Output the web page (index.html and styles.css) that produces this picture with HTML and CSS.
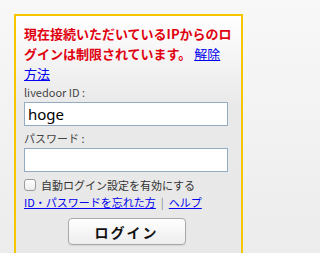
FILE: index.html
```html
<!DOCTYPE html>
<html lang="ja">
<head>
<meta charset="utf-8">
<title>ログイン</title>
<link rel="stylesheet" href="styles.css">
</head>
<body>
<div class="login-box">
  <p class="notice">現在接続いただいているIPからのログインは制限されています。 <a href="#" class="notice-link">解除方法</a></p>
  <label class="field-label" for="uid">livedoor ID :</label>
  <input class="text-input" id="uid" type="text" value="hoge">
  <label class="field-label field-label-spaced" for="pw">パスワード :</label>
  <input class="text-input" id="pw" type="password">
  <div class="auto-row">
    <input type="checkbox" class="check" id="auto">
    <label for="auto" class="auto-label">自動ログイン設定を有効にする</label>
  </div>
  <div class="help-row">
    <a href="#">ID・パスワードを忘れた方</a><span class="sep">|</span><a href="#">ヘルプ</a>
  </div>
  <div class="btn-row">
    <button class="login-btn" type="button">ログイン</button>
  </div>
</div>
</body>
</html>
```

FILE: styles.css
```css
html {
  margin: 0;
  width: 260px;
  height: 253px;
  overflow: hidden;
}
body {
  margin: 0;
  width: 260px;
  height: 253px;
  padding: 14px 17px 0 14px;
  box-sizing: border-box;
  background: linear-gradient(#f8f8f8, #ececec);
  font-family: "Noto Sans CJK JP", "Noto Sans", sans-serif;
  overflow: hidden;
}
.login-box {
  border: 2px solid #f7c600;
  border-bottom: none;
  background: linear-gradient(#ffffff 0px, #e9e9e9 90px, #e8e8e8 100%);
  padding: 8px 8px 0 8px;
  height: 239px;
  box-sizing: border-box;
  overflow: hidden;
}
.notice {
  margin: 0;
  font-size: 13px;
  line-height: 20px;
  font-weight: bold;
  color: #e0000f;
}
.notice-link {
  font-weight: normal;
  color: #0000ee;
}
.field-label {
  display: block;
  font-size: 11px;
  line-height: 16px;
  color: #444;
  margin-bottom: 2px;
}
.field-label-spaced {
  margin-top: 4px;
}
.text-input {
  display: block;
  box-sizing: border-box;
  width: 204px;
  height: 24px;
  margin: 0;
  border: 1px solid #93abc3;
  border-radius: 0;
  background: #fff;
  padding: 0 3px;
  font-family: "Noto Sans", "Noto Sans CJK JP", sans-serif;
  font-size: 15px;
  color: #000;
  outline: none;
}
.auto-row {
  display: flex;
  align-items: center;
  margin-top: 4px;
  height: 18px;
}
.check {
  appearance: none;
  -webkit-appearance: none;
  width: 12px;
  height: 12px;
  margin: 0 5px 0 0;
  border: 1px solid #9a9a9a;
  border-radius: 3px;
  background: linear-gradient(#ffffff, #ececec);
  box-sizing: border-box;
}
.auto-label {
  font-size: 11px;
  line-height: 18px;
  color: #333;
}
.help-row {
  font-size: 11px;
  line-height: 16px;
  color: #888;
}
.help-row a {
  color: #0000ee;
}
.sep {
  margin: 0 5px;
}
.btn-row {
  display: flex;
  justify-content: center;
  margin-top: 8px;
  padding-right: 4px;
}
.login-btn {
  width: 118px;
  height: 27px;
  border: 1px solid #a9a9a9;
  border-radius: 4px;
  background: linear-gradient(#ffffff, #ededed);
  box-shadow: 0 1px 1px rgba(0,0,0,0.08);
  font-family: "Noto Sans CJK JP", sans-serif;
  font-size: 14px;
  font-weight: bold;
  color: #111;
  letter-spacing: 2px;
  padding: 0;
}
```
